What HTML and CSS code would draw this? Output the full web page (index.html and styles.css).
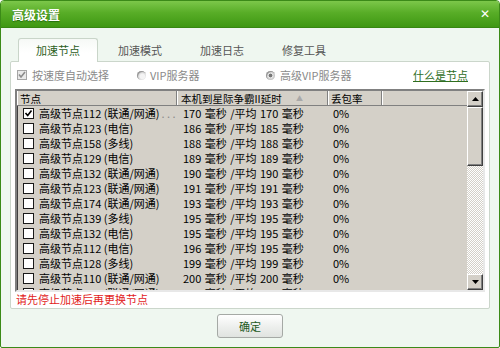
FILE: index.html
```html
<!DOCTYPE html>
<html lang="zh-CN">
<head>
  <meta charset="UTF-8">
  <title>高级设置</title>
  <link rel="stylesheet" href="styles.css">
</head>

<body>

<div class="window">

  <!-- 标题栏 -->
  <div class="titlebar">
    <span class="title">高级设置</span>
    <span class="close">✕</span>
  </div>

  <div class="body">

    <!-- 选项卡 -->
    <div class="tabs">
      <div class="tab active">加速节点</div>
      <div class="tab">加速模式</div>
      <div class="tab">加速日志</div>
      <div class="tab">修复工具</div>
    </div>

    <div class="panel">

      <div class="options">
        <div class="opt opt-auto">
          <span class="chk-small">
            <svg width="8" height="8" viewBox="0 0 8 8"><path d="M1 3.5 L3 6 L7 1" fill="none" stroke="#8c8c8c" stroke-width="1.6"/></svg>
          </span>
          <span>按速度自动选择</span>
        </div>
        <div class="opt opt-vip">
          <span class="radio"></span>
          <span>VIP服务器</span>
        </div>
        <div class="opt">
          <span class="radio on"></span>
          <span>高级VIP服务器</span>
        </div>
        <a class="help-link">什么是节点</a>
      </div>

      <!-- 节点列表 -->
      <div class="listview">
        <div class="list-main">
          <div class="list-head">
            <div class="cell c1">节点</div>
            <div class="cell c2">本机到星际争霸II延时 <span class="sort">▲</span></div>
            <div class="cell c3">丢包率</div>
            <div class="cell c4"></div>
          </div>
          <div class="list-rows">
            <div class="row">
              <div class="c1"><span class="chk on"><svg width="9" height="9" viewBox="0 0 9 9"><path d="M1.5 4 L3.7 6.5 L7.5 1.5" fill="none" stroke="#000" stroke-width="1.6"/></svg></span>高级节点112 (联通/网通)<span class="more">. . .</span></div>
              <div class="c2">170 毫秒 /平均 170 毫秒</div>
              <div class="c3">0%</div>
            </div>
            <div class="row">
              <div class="c1"><span class="chk"></span>高级节点123 (电信)</div>
              <div class="c2">186 毫秒 /平均 185 毫秒</div>
              <div class="c3">0%</div>
            </div>
            <div class="row">
              <div class="c1"><span class="chk"></span>高级节点158 (多线)</div>
              <div class="c2">188 毫秒 /平均 188 毫秒</div>
              <div class="c3">0%</div>
            </div>
            <div class="row">
              <div class="c1"><span class="chk"></span>高级节点129 (电信)</div>
              <div class="c2">189 毫秒 /平均 189 毫秒</div>
              <div class="c3">0%</div>
            </div>
            <div class="row">
              <div class="c1"><span class="chk"></span>高级节点132 (联通/网通)</div>
              <div class="c2">190 毫秒 /平均 190 毫秒</div>
              <div class="c3">0%</div>
            </div>
            <div class="row">
              <div class="c1"><span class="chk"></span>高级节点123 (联通/网通)</div>
              <div class="c2">191 毫秒 /平均 191 毫秒</div>
              <div class="c3">0%</div>
            </div>
            <div class="row">
              <div class="c1"><span class="chk"></span>高级节点174 (联通/网通)</div>
              <div class="c2">193 毫秒 /平均 193 毫秒</div>
              <div class="c3">0%</div>
            </div>
            <div class="row">
              <div class="c1"><span class="chk"></span>高级节点139 (多线)</div>
              <div class="c2">195 毫秒 /平均 195 毫秒</div>
              <div class="c3">0%</div>
            </div>
            <div class="row">
              <div class="c1"><span class="chk"></span>高级节点132 (电信)</div>
              <div class="c2">195 毫秒 /平均 195 毫秒</div>
              <div class="c3">0%</div>
            </div>
            <div class="row">
              <div class="c1"><span class="chk"></span>高级节点112 (电信)</div>
              <div class="c2">196 毫秒 /平均 195 毫秒</div>
              <div class="c3">0%</div>
            </div>
            <div class="row">
              <div class="c1"><span class="chk"></span>高级节点128 (多线)</div>
              <div class="c2">199 毫秒 /平均 199 毫秒</div>
              <div class="c3">0%</div>
            </div>
            <div class="row">
              <div class="c1"><span class="chk"></span>高级节点110 (联通/网通)</div>
              <div class="c2">200 毫秒 /平均 200 毫秒</div>
              <div class="c3">0%</div>
            </div>
            <div class="row">
              <div class="c1"><span class="chk"></span>高级节点116 (联通/网通)</div>
              <div class="c2">201 毫秒 /平均 201 毫秒</div>
              <div class="c3">0%</div>
            </div>
          </div>
        </div>

        <!-- 滚动条 -->
        <div class="scrollbar">
          <div class="sb-btn">
            <svg width="7" height="4" viewBox="0 0 7 4"><path d="M0 4 L3.5 0 L7 4 Z" fill="#000"/></svg>
          </div>
          <div class="sb-thumb"></div>
          <div class="sb-track"></div>
          <div class="sb-btn">
            <svg width="7" height="4" viewBox="0 0 7 4"><path d="M0 0 L7 0 L3.5 4 Z" fill="#000"/></svg>
          </div>
        </div>
      </div>

      <div class="notice">请先停止加速后再更换节点</div>
    </div>

    <div class="footer">
      <button class="ok-btn">确定</button>
    </div>

  </div>
</div>

</body>
</html>
```

FILE: styles.css
```css
html, body {
  margin: 0;
  padding: 0;
}

body {
  font-family: "Noto Sans CJK SC", "Noto Sans", sans-serif;
  font-size: 11px;
  color: #000;
  background-color: #ffffff;
}

.window {
  width: 500px;
  height: 348px;
  box-sizing: border-box;
  border: 1px solid #3b8a18;
  border-radius: 4px 4px 2px 2px;
  background-color: #eff7f0;
  overflow: hidden;
  display: flex;
  flex-direction: column;
}

.titlebar {
  height: 26px;
  flex: none;
  display: flex;
  align-items: center;
  justify-content: space-between;
  padding: 0 9px 0 11px;
  background: linear-gradient(#7cc74a, #58ad27 45%, #3f9813 100%);
  border-bottom: 1px solid #378712;
}

.title {
  color: #fff;
  font-size: 12px;
  font-weight: bold;
  text-shadow: 0 1px 1px rgba(0, 60, 0, 0.5);
}

.close {
  color: #fff;
  font-size: 12px;
  font-weight: bold;
  font-family: "DejaVu Sans", sans-serif;
}

.body {
  flex: 1;
  display: flex;
  flex-direction: column;
  padding: 10px 9px 0 9px;
}

.tabs {
  display: flex;
  padding-left: 8px;
  height: 24px;
  position: relative;
  z-index: 1;
  margin-bottom: -1px;
}

.tab {
  width: 80px;
  margin-right: 2px;
  box-sizing: border-box;
  text-align: center;
  line-height: 24px;
  color: #555;
}

.tab.active {
  background: linear-gradient(#f6f9f6, #ffffff 60%);
  border: 1px solid #c9d5c9;
  border-bottom: none;
  border-radius: 3px 3px 0 0;
  color: #2c5d1c;
  line-height: 23px;
}

.panel {
  background-color: #fff;
  border: 1px solid #cbd6cb;
  border-radius: 2px;
  padding: 5px 4px 1px 4px;
  height: 248px;
  box-sizing: border-box;
}

.options {
  display: flex;
  align-items: center;
  height: 16px;
  padding-left: 2px;
  color: #8a8a8a;
  margin-bottom: 6px;
}

.opt {
  display: flex;
  align-items: center;
}

.opt-auto {
  width: 120px;
}

.opt-vip {
  width: 129px;
}

.chk-small {
  width: 10px;
  height: 10px;
  box-sizing: border-box;
  border: 1px solid #a5a5a5;
  background-color: #e9e9e9;
  margin-right: 5px;
  display: flex;
  align-items: center;
  justify-content: center;
}

.radio {
  width: 9px;
  height: 9px;
  border-radius: 50%;
  background: radial-gradient(circle at 60% 60%, #f4f4f4 30%, #b9b9b9 75%);
  box-shadow: inset 1px 1px 0 #9a9a9a;
  margin-right: 4px;
}

.radio.on {
  background: radial-gradient(circle, #777 0 25%, #e6e6e6 35%, #b4b4b4 80%);
  margin-right: 5px;
}

.help-link {
  margin-left: auto;
  margin-right: 17px;
  color: #2f6e1f;
  text-decoration: underline;
  cursor: pointer;
}

/* 列表 */
.listview {
  height: 203px;
  width: 470px;
  box-sizing: border-box;
  border-top: 2px solid #808080;
  border-left: 2px solid #808080;
  border-right: 2px solid #e8e8e8;
  border-bottom: 2px solid #e8e8e8;
  box-shadow: inset 1px 1px 0 #404040;
  background-color: #d4d0c8;
  display: flex;
  overflow: hidden;
}

.list-main {
  flex: 1;
  overflow: hidden;
}

.list-head {
  display: flex;
  height: 15px;
  background-color: #d4d0c8;
  border-bottom: 1px solid #808080;
  box-sizing: border-box;
  font-size: 10.5px;
}

.list-head .cell {
  box-sizing: border-box;
  border-right: 1px solid #808080;
  box-shadow: inset 1px 0 0 #fff;
  white-space: nowrap;
  line-height: 15px;
}

.list-head .c1 {
  width: 160px;
  padding-left: 3px;
}

.list-head .c2 {
  width: 151px;
  padding-left: 4px;
}

.list-head .c3 {
  width: 54px;
  padding-left: 3px;
}

.list-head .c4 {
  flex: 1;
  border-right: none;
}

.sort {
  color: #a8a8a8;
  font-size: 7px;
  margin-left: 12px;
  vertical-align: top;
}

.row {
  display: flex;
  height: 15px;
  line-height: 15px;
  white-space: nowrap;
}

.row .c1 {
  width: 160px;
  padding-left: 6px;
  box-sizing: border-box;
  display: flex;
  align-items: center;
}

.row .c2 {
  width: 151px;
  padding-left: 6px;
  box-sizing: border-box;
  word-spacing: 1px;
}

.row .c3 {
  width: 54px;
  padding-left: 5px;
  box-sizing: border-box;
}

.chk {
  width: 11px;
  height: 11px;
  box-sizing: border-box;
  border: 1px solid #1a1a1a;
  background-color: #fff;
  margin-right: 5px;
  display: flex;
  align-items: center;
  justify-content: center;
  flex: none;
}

.more {
  color: #8a8a8a;
  margin-left: 2px;
}

/* 滚动条 */
.scrollbar {
  width: 16px;
  flex: none;
  display: flex;
  flex-direction: column;
  background-color: #ebe9e5;
}

.sb-btn, .sb-thumb {
  background-color: #d4d0c8;
  box-sizing: border-box;
  border-top: 1px solid #fff;
  border-left: 1px solid #fff;
  border-right: 1px solid #404040;
  border-bottom: 1px solid #404040;
  box-shadow: inset -1px -1px 0 #808080;
}

.sb-btn {
  height: 16px;
  display: flex;
  align-items: center;
  justify-content: center;
}

.sb-thumb {
  height: 59px;
}

.sb-track {
  flex: 1;
  background-image: repeating-conic-gradient(#ffffff 0 25%, #d4d0c8 0 50%);
  background-size: 2px 2px;
}

.notice {
  color: #e21b1b;
  height: 14px;
  line-height: 14px;
  padding-left: 1px;
}

.footer {
  display: flex;
  justify-content: center;
  padding-top: 5px;
}

.ok-btn {
  width: 66px;
  height: 24px;
  font-family: inherit;
  font-size: 11px;
  color: #1e5b1e;
  background: linear-gradient(#ffffff, #eef0ee 50%, #e0e3e0);
  border: 1px solid #a5a9a5;
  border-radius: 3px;
  padding: 0;
  cursor: pointer;
}
```
